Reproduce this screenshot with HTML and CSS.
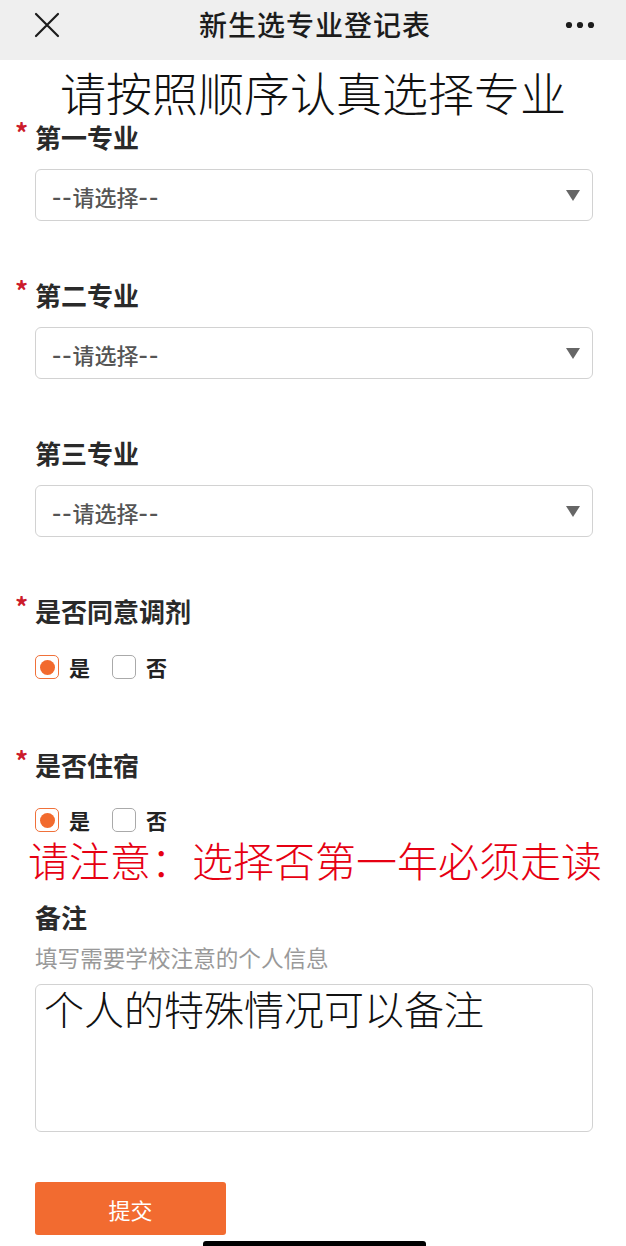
FILE: index.html
```html
<!DOCTYPE html>
<html lang="zh-CN">
<head>
<meta charset="utf-8">
<title>新生选专业登记表</title>
<link rel="stylesheet" href="styles.css">
</head>
<body>
<header class="topbar">
  <div class="topbar-row">
    <div class="topbar-left">
      <svg class="icon-close" width="26" height="26" viewBox="0 0 26 26"><path d="M2 2 L24 24 M24 2 L2 24" stroke="#1c1c1c" stroke-width="2.2" stroke-linecap="round" fill="none"/></svg>
    </div>
    <div class="topbar-title">新生选专业登记表</div>
    <div class="topbar-right">
      <svg class="icon-more" width="30" height="8" viewBox="0 0 30 8"><circle cx="4" cy="4" r="3.1" fill="#1c1c1c"/><circle cx="15" cy="4" r="3.1" fill="#1c1c1c"/><circle cx="26" cy="4" r="3.1" fill="#1c1c1c"/></svg>
    </div>
  </div>
</header>

<h1 class="banner">请按照顺序认真选择专业</h1>

<main class="form">
  <section class="field field-first">
    <div class="label required">第一专业</div>
    <div class="select">
      <span class="select-text"><span class="dash">--</span>请选择<span class="dash">--</span></span>
      <svg class="select-arrow" width="14" height="11" viewBox="0 0 14 11"><path d="M0 0 H14 L7 11 Z" fill="#666"/></svg>
    </div>
  </section>

  <section class="field">
    <div class="label required">第二专业</div>
    <div class="select">
      <span class="select-text"><span class="dash">--</span>请选择<span class="dash">--</span></span>
      <svg class="select-arrow" width="14" height="11" viewBox="0 0 14 11"><path d="M0 0 H14 L7 11 Z" fill="#666"/></svg>
    </div>
  </section>

  <section class="field">
    <div class="label">第三专业</div>
    <div class="select">
      <span class="select-text"><span class="dash">--</span>请选择<span class="dash">--</span></span>
      <svg class="select-arrow" width="14" height="11" viewBox="0 0 14 11"><path d="M0 0 H14 L7 11 Z" fill="#666"/></svg>
    </div>
  </section>

  <section class="field">
    <div class="label required">是否同意调剂</div>
    <div class="choices">
      <span class="box checked"><span class="dot"></span></span><span class="choice-text">是</span>
      <span class="box"></span><span class="choice-text">否</span>
    </div>
  </section>

  <section class="field field-stay">
    <div class="label required">是否住宿</div>
    <div class="choices choices-stay">
      <span class="box checked"><span class="dot"></span></span><span class="choice-text">是</span>
      <span class="box"></span><span class="choice-text">否</span>
    </div>
  </section>

  <p class="notice">请注意：选择否第一年必须走读</p>

  <section class="field field-note">
    <div class="label">备注</div>
    <div class="hint">填写需要学校注意的个人信息</div>
    <div class="textarea">个人的特殊情况可以备注</div>
  </section>

  <button class="submit" type="button">提交</button>
</main>

<div class="home-bar"></div>
</body>
</html>
```

FILE: styles.css
```css
html, body {
  margin: 0;
  padding: 0;
  background: #ffffff;
}

body {
  font-family: "Noto Sans CJK SC", "Noto Sans", sans-serif;
  color: #222;
  width: 626px;
  overflow: hidden;
}

.topbar {
  height: 60px;
  background: #efefef;
}

.topbar-row {
  height: 49px;
  display: grid;
  grid-template-columns: 1fr auto 1fr;
  align-items: center;
  padding: 0 31px 0 34px;
}

.topbar-left {
  display: flex;
  align-items: center;
}

.topbar-right {
  display: flex;
  justify-content: flex-end;
  align-items: center;
}

.icon-close {
  display: block;
}

.icon-more {
  display: block;
}

.topbar-title {
  font-size: 28px;
  font-weight: 500;
  letter-spacing: 1px;
  line-height: 49px;
  color: #1c1c1c;
  margin-right: -1px;
}

.banner {
  margin: 0;
  padding-top: 8px;
  font-size: 46px;
  line-height: 46px;
  font-weight: 300;
  text-align: center;
  color: #111;
}

.form {
  padding: 0 33px 0 35px;
}

.field {
  margin-top: 58px;
}

.field-first {
  margin-top: 7px;
}

.field-stay {
  margin-top: 70px;
}

.label {
  position: relative;
  font-size: 26px;
  line-height: 32px;
  font-weight: 700;
  color: #2a2a2a;
}

.required::before {
  content: "*";
  position: absolute;
  left: -20px;
  top: -5px;
  color: #cc1b2b;
  font-size: 26px;
  font-weight: 700;
  line-height: 32px;
}

.select {
  margin-top: 16px;
  height: 52px;
  box-sizing: border-box;
  border: 1.5px solid #d2d2d2;
  border-radius: 6px;
  display: flex;
  align-items: center;
  justify-content: space-between;
  padding: 0 12px 0 16px;
}

.select-text {
  font-size: 22px;
  line-height: 26px;
  color: #555;
  font-weight: 500;
}

.dash {
  font-size: 26px;
  letter-spacing: 1px;
}

.select-arrow {
  display: block;
}

.choices {
  margin-top: 28px;
  height: 24px;
  display: flex;
  align-items: center;
}

.choices-stay {
  margin-top: 27px;
}

.box {
  width: 24px;
  height: 24px;
  box-sizing: border-box;
  border: 1.5px solid #aaaaaa;
  border-radius: 5px;
  display: flex;
  align-items: center;
  justify-content: center;
  background: #fff;
}

.box.checked {
  border-color: #f0713a;
}

.dot {
  width: 15px;
  height: 15px;
  border-radius: 50%;
  background: #f26a2e;
}

.choice-text {
  font-size: 21px;
  font-weight: 700;
  line-height: 24px;
  color: #222;
  margin-left: 10px;
  margin-right: 22px;
}

.notice {
  margin: 6px 0 0 -7px;
  font-size: 41px;
  line-height: 42px;
  font-weight: 300;
  color: #e60012;
  white-space: nowrap;
}

.field-note {
  margin-top: 21px;
}

.hint {
  margin-top: 13px;
  font-size: 22.6px;
  line-height: 24px;
  color: #999;
}

.textarea {
  margin-top: 14px;
  height: 148px;
  box-sizing: border-box;
  border: 1.5px solid #d2d2d2;
  border-radius: 6px;
  padding: 3px 8px;
  font-size: 40px;
  line-height: 40px;
  font-weight: 300;
  color: #111;
}

.submit {
  display: block;
  margin-top: 50px;
  width: 191px;
  height: 53px;
  border: none;
  border-radius: 3px;
  background: #f26b30;
  color: #fff;
  font-family: "Noto Sans CJK SC", "Noto Sans", sans-serif;
  font-size: 22px;
  padding: 0;
}

.home-bar {
  margin: 6px 0 0 203px;
  width: 223px;
  height: 6px;
  border-radius: 3px 3px 0 0;
  background: #000;
}
```
